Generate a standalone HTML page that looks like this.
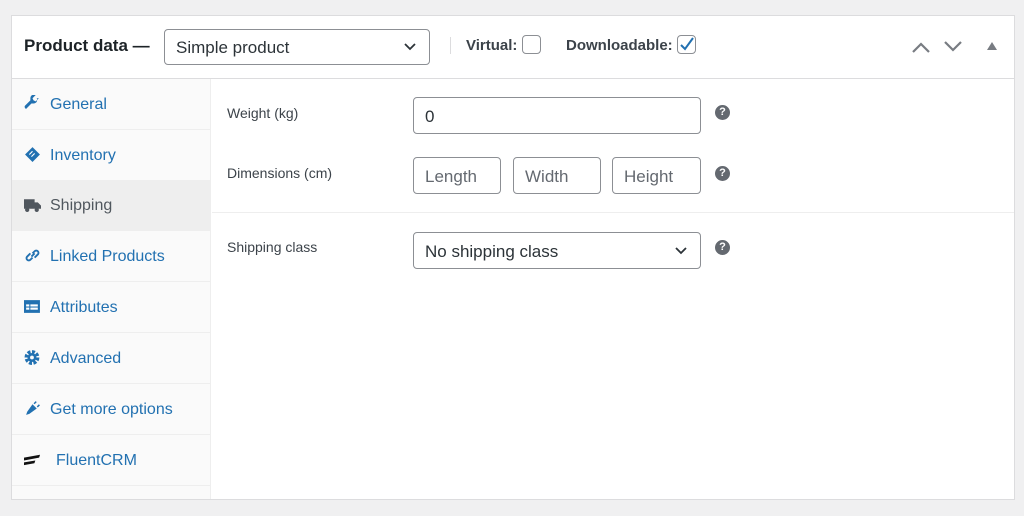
<!DOCTYPE html><html><head><style>
*{box-sizing:border-box;margin:0;padding:0}
body{width:1024px;height:516px;background:#f0f0f1;font-family:"Liberation Sans",sans-serif;position:relative;overflow:hidden}
.a{position:absolute}
.panel{left:11px;top:15px;width:1004px;height:485px;background:#fff;border:1px solid #dcdcde}
.box{border:1px solid #8c8f94;border-radius:4px;background:#fff;color:#2c3338;font-size:17px;padding-left:11px;display:flex;align-items:center;padding-top:2px}
.tab{left:12px;width:199px;height:51px;border-bottom:1px solid #eee;color:#2271b1;font-size:16px;display:flex;align-items:center;padding-left:38px;padding-top:2px}
.ic{position:absolute;left:12px;top:16px;width:17px;height:17px}
.lbl{font-size:14px;color:#3c434a}
.help{width:15px;height:15px;border-radius:50%;background:#646970;color:#fff;font-size:11px;font-weight:bold;text-align:center;line-height:15px}
.chev{position:absolute;right:12px;top:50%;margin-top:-6px}
</style></head><body>
<div class="a panel"></div>
<div class="a" style="left:12px;top:78px;width:1002px;height:1px;background:#dcdcde"></div>
<div class="a" style="left:24px;top:36px;font-size:17px;font-weight:bold;color:#1d2327">Product data —</div>
<div class="a box" style="left:164px;top:29px;width:266px;height:36px;font-size:17px">Simple product<svg class="chev" width="14" height="12" viewBox="0 0 14 12"><path d="M2 3l5 5 5-5" fill="none" stroke="#2c3338" stroke-width="1.8"/></svg></div>
<div class="a" style="left:450px;top:37px;width:1px;height:17px;background:#dcdcde"></div>
<div class="a" style="left:466px;top:37px;font-size:15px;font-weight:bold;color:#3c434a">Virtual:</div>
<div class="a" style="left:522px;top:35px;width:19px;height:19px;border:1px solid #8c8f94;border-radius:4px"></div>
<div class="a" style="left:566px;top:37px;font-size:15px;font-weight:bold;color:#3c434a">Downloadable:</div>
<div class="a" style="left:677px;top:35px;width:19px;height:19px;border:1px solid #8c8f94;border-radius:4px"><svg width="17" height="17" viewBox="0 0 17 17" style="position:absolute;left:0;top:0"><path d="M3 9l4 4 8-11" fill="none" stroke="#2271b1" stroke-width="2"/></svg></div>
<svg class="a" style="left:911px;top:40px" width="20" height="14" viewBox="0 0 20 14"><path d="M2 12l8-8 8 8" fill="none" stroke="#787c82" stroke-width="2.2"/></svg>
<svg class="a" style="left:943px;top:40px" width="20" height="14" viewBox="0 0 20 14"><path d="M2 2l8 8 8-8" fill="none" stroke="#787c82" stroke-width="2.2"/></svg>
<svg class="a" style="left:986px;top:41px" width="12" height="10" viewBox="0 0 12 10"><path d="M1 9l5-8 5 8z" fill="#787c82"/></svg>
<div class="a" style="left:12px;top:79px;width:199px;height:420px;background:#fafafa;border-right:1px solid #eee"></div>
<div class="a tab" style="top:79px">General<svg class="ic" viewBox="0 0 16 16"><path d="M14 3l-3 3-2-1-1-2 3-3c-2-1-5 0-5 3 0 1 0 1 0 2L1 10c-1 1 0 3 1 3l5-5c1 0 1 0 2 0 3 0 4-3 3-5z" fill="#2271b1"/></svg></div>
<div class="a tab" style="top:130px">Inventory<svg class="ic" viewBox="0 0 16 16"><path d="M8 1l7 7-7 7-7-7z" fill="#2271b1"/><path d="M5 8l3-3M7 10l3-3" stroke="#fff" stroke-width="1"/></svg></div>
<div class="a tab" style="top:180px;background:#eee;color:#50575e">Shipping<svg class="ic" viewBox="0 0 16 16"><path d="M0 3h10v9H0zM10 6h3l3 3v3h-6z" fill="#50575e"/><circle cx="3" cy="13" r="2" fill="#50575e"/><circle cx="12" cy="13" r="2" fill="#50575e"/></svg></div>
<div class="a tab" style="top:231px">Linked Products<svg class="ic" viewBox="0 0 16 16"><path d="M7 9l3-3M6 6l-3 3a2 2 0 0 0 3 3l2-2M10 10l3-3a2 2 0 0 0-3-3L8 6" fill="none" stroke="#2271b1" stroke-width="1.8"/></svg></div>
<div class="a tab" style="top:282px">Attributes<svg class="ic" viewBox="0 0 16 16"><rect x="0" y="2" width="15" height="12" fill="#2271b1"/><rect x="2" y="6" width="3" height="2" fill="#fff"/><rect x="2" y="9" width="3" height="2" fill="#fff"/><rect x="6" y="6" width="7" height="2" fill="#fff"/><rect x="6" y="9" width="7" height="2" fill="#fff"/></svg></div>
<div class="a tab" style="top:333px">Advanced<svg class="ic" viewBox="0 0 16 16"><circle cx="7.5" cy="8" r="5" fill="none" stroke="#2271b1" stroke-width="4" stroke-dasharray="2.6 1.3"/><circle cx="7.5" cy="8" r="4.2" fill="#2271b1"/><circle cx="7.5" cy="8" r="1.8" fill="#fafafa"/></svg></div>
<div class="a tab" style="top:384px">Get more options<svg class="ic" viewBox="0 0 16 16"><path d="M2 14l3-1 7-5-4-4-5 7z M9 3l2-2 1 1-2 2zM12 6l2-2 1 1-2 2z" fill="#2271b1"/></svg></div>
<div class="a tab" style="top:435px;padding-left:44px">FluentCRM<svg class="ic" viewBox="0 0 18 16"><path d="M0 6l17-3-1 3-16 3zM0 11l12-2-1 3-11 2z" fill="#111"/></svg></div>
<div class="a lbl" style="left:227px;top:105px">Weight (kg)</div>
<div class="a box" style="left:413px;top:97px;width:288px;height:37px">0</div>
<div class="a help" style="left:715px;top:105px">?</div>
<div class="a lbl" style="left:227px;top:165px">Dimensions (cm)</div>
<div class="a box" style="left:413px;top:157px;width:88px;height:37px;color:#646970">Length</div>
<div class="a box" style="left:513px;top:157px;width:88px;height:37px;color:#646970">Width</div>
<div class="a box" style="left:612px;top:157px;width:89px;height:37px;color:#646970">Height</div>
<div class="a help" style="left:715px;top:166px">?</div>
<div class="a" style="left:212px;top:212px;width:802px;height:1px;background:#eee"></div>
<div class="a lbl" style="left:227px;top:239px">Shipping class</div>
<div class="a box" style="left:413px;top:232px;width:288px;height:37px">No shipping class<svg class="chev" width="14" height="12" viewBox="0 0 14 12"><path d="M2 3l5 5 5-5" fill="none" stroke="#2c3338" stroke-width="1.8"/></svg></div>
<div class="a help" style="left:715px;top:240px">?</div>
</body></html>
